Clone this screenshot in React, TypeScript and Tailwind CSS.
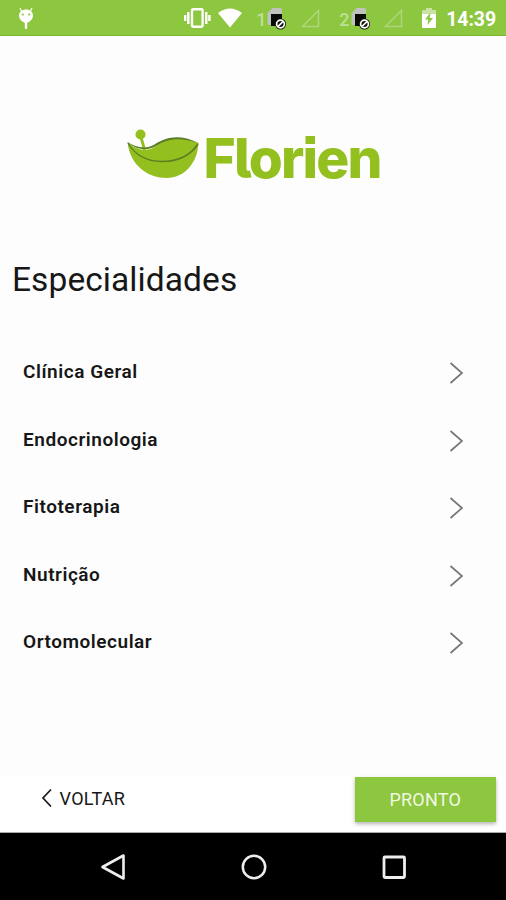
const specialties = [
  "Clínica Geral",
  "Endocrinologia",
  "Fitoterapia",
  "Nutrição",
  "Ortomolecular",
];

function SimIcon() {
  return (
    <svg width="20" height="24" viewBox="0 0 20 24" className="shrink-0">
      <path d="M5.500 2H13q2 0 2 2v15H1.500q-1 0-1-1V7z" fill="#bfc3bb" />
      <path d="M4 8h11v12H4z" fill="#080a05" />
      <circle cx="13.500" cy="18" r="5.500" fill="#11150c" />
      <circle cx="13.500" cy="18" r="3.900" fill="none" stroke="#fff" strokeWidth="1.700" />
      <path d="M11 20.500l5-5" stroke="#fff" strokeWidth="1.700" />
    </svg>
  );
}

function SignalIcon() {
  return (
    <svg width="20" height="20" viewBox="0 0 20 20" className="shrink-0">
      <path d="M1.500 18.500L17.500 2.500v16z" fill="none" stroke="#b0d67b" strokeWidth="1.500" />
    </svg>
  );
}

function StatusBar() {
  return (
    <header className="flex h-9 shrink-0 items-center border-b border-[#7eb530] bg-[#8dc63f] pr-[10px] pl-[17px] text-white">
      <svg width="18" height="24" viewBox="0 0 18 24" className="mt-[2px] shrink-0">
        <path d="M4.500 4L3 1M13.500 4L15 1" stroke="#fff" strokeWidth="1.200" />
        <path d="M9 2.500c4 0 7 2.500 7 6 0 3.700-3 6.200-5.800 7.300V21q0 1-1.200 1t-1.200-1v-5.200C5 14.700 2 12.200 2 8.500c0-3.500 3-6 7-6z" fill="#fff" />
        <circle cx="5.800" cy="7.500" r="1.200" fill="#a8d36b" />
        <circle cx="12.200" cy="7.500" r="1.200" fill="#a8d36b" />
      </svg>
      <div className="ml-auto flex items-center">
        <svg width="28" height="22" viewBox="0 0 28 22" className="shrink-0">
          <rect x="8" y="2.200" width="10.600" height="17.600" rx="1.200" fill="none" stroke="#fff" strokeWidth="2.400" />
          <path d="M4.300 5v12M22.300 5v12M1.200 8v6M25.400 8v6" stroke="#fff" strokeWidth="2.400" />
        </svg>
        <svg width="26" height="20" viewBox="0 0 26 20" className="ml-[5px] mr-px shrink-0">
          <path d="M1 5Q13-4 25 5L13 19.500z" fill="#fff" />
        </svg>
        <span className="ml-[12px] w-[11px] pt-[4px] text-[18px] leading-5 font-medium text-[#bfdf94]">1</span>
        <SimIcon />
        <span className="ml-[14px]"><SignalIcon /></span>
        <span className="ml-[18px] w-[12px] pt-[4px] text-[18px] leading-5 font-medium text-[#bfdf94]">2</span>
        <SimIcon />
        <span className="ml-[13px]"><SignalIcon /></span>
        <svg width="14" height="21" viewBox="0 0 14 21" className="mt-[2px] ml-[18px] shrink-0">
          <path d="M4 2V0h6v2h3q1 0 1 1v4H0V3q0-1 1-1z" fill="#c9e3a5" />
          <path d="M0 6h14v13q0 1-1 1H1q-1 0-1-1z" fill="#fff" />
          <path d="M8.500 4.500L3 11.500h3.300L5.500 17l5.500-7H7.700z" fill="#8dc63f" />
        </svg>
        <time className="ml-[10px] pt-[4px] text-[19.500px] leading-6 font-bold tracking-[-0.1px]">14:39</time>
      </div>
    </header>
  );
}

function Logo() {
  return (
    <div className="flex h-[60px] items-start pl-[126px]">
      <svg width="74" height="52" viewBox="0 0 74 52" className="shrink-0">
        <path d="M14 7q2 5 4.500 15" fill="none" stroke="#93c01f" strokeWidth="3" />
        <circle cx="14.500" cy="6.500" r="5" fill="#93c01f" />
        <path d="M1.500 14c8 7 18 11 28 4.500C41 10 53 7 72.500 15c-1 20-14 35-32 35S4 38 1.500 14z" fill="#93c01f" />
        <path d="M1.500 14c8 5 18 8 27 2.500C41 8.500 54 6 72.500 15 53 9 42 10.500 30 18 20 24 8 20.500 1.500 14z" fill="#5a7d25" />
        <path d="M2 15c7 12 19 18.500 34 18.500S64 28 72 16" fill="none" stroke="#5a7d25" strokeWidth="1.400" />
        <path d="M72.500 15q-3 7-9 10 4-4 5-6z" fill="#5a7d25" />
      </svg>
      <span className="ml-[3.500px] font-['Inter',sans-serif] text-[55px] leading-[60px] font-extrabold tracking-[-1.800px] text-[#93c01f] [font-feature-settings:'cv05','ss07']">
        Florien
      </span>
    </div>
  );
}

export default function App() {
  return (
    <div className="flex h-[900px] w-[506px] flex-col overflow-hidden bg-[#fdfdfd] font-['Roboto',sans-serif] text-[#171717]">
      <StatusBar />

      <main className="flex flex-1 flex-col pt-[92px]">
        <Logo />
        <h1 className="mt-[72px] pl-[12px] text-[33.500px] leading-10 font-normal tracking-[0.080px]">
          Especialidades
        </h1>
        <ul className="mt-[38px]">
          {specialties.map((name) => (
            <li key={name} className="flex h-[67.500px] items-center justify-between pr-[42px] pl-[23px]">
              <span className="pt-px text-[19px] leading-6 font-semibold tracking-[0.540px]">{name}</span>
              <svg width="15" height="24" viewBox="0 0 15 24" className="mt-[3px]">
                <path d="M1.500 2L13 12 1.500 22" fill="none" stroke="#777" strokeWidth="1.700" />
              </svg>
            </li>
          ))}
        </ul>
      </main>

      <footer className="flex h-[57px] shrink-0 items-start justify-between border-b border-[#aaa] bg-white pt-px pr-[10.500px] pl-[41px]">
        <button className="mt-[9px] flex h-6 items-center text-[18px] tracking-[0.300px]">
          <svg width="12" height="20" viewBox="0 0 12 20" className="mr-[6.500px]">
            <path d="M10 1.500L2 10l8 8.500" fill="none" stroke="#171717" strokeWidth="1.700" />
          </svg>
          VOLTAR
        </button>
        <button className="h-[45px] w-[140.500px] bg-[#8dc63f] text-[18px] tracking-[0.200px] text-[#f1f9e5] shadow-[0_2px_4px_rgba(0,0,0,0.3)]">
          PRONTO
        </button>
      </footer>

      <nav className="flex h-[67px] shrink-0 items-center justify-between bg-black pr-[98px] pl-[99px]">
        <svg width="28" height="28" viewBox="0 0 28 28">
          <path d="M24.500 2.500v23L3.500 14z" fill="none" stroke="#eee" strokeWidth="2.600" strokeLinejoin="round" />
        </svg>
        <svg width="28" height="28" viewBox="0 0 28 28">
          <circle cx="14" cy="14" r="11.200" fill="none" stroke="#eee" strokeWidth="2.500" />
        </svg>
        <svg width="28" height="28" viewBox="0 0 28 28">
          <rect x="4" y="4" width="20.500" height="20.500" rx="1" fill="none" stroke="#eee" strokeWidth="2.800" />
        </svg>
      </nav>
    </div>
  );
}
